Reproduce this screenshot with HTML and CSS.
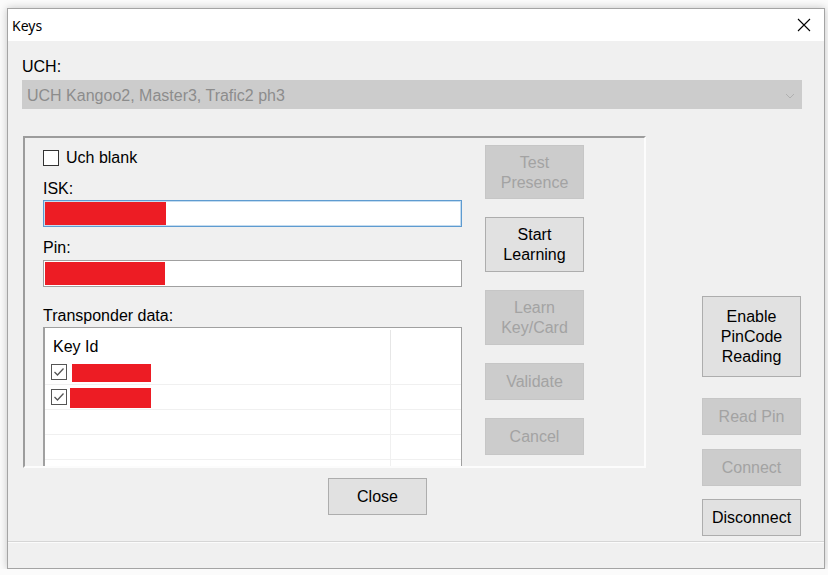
FILE: index.html
```html
<!DOCTYPE html>
<html lang="en">
<head>
<meta charset="utf-8">
<title>Keys</title>
<link rel="stylesheet" href="styles.css">
</head>
<body>
  <div class="window">
    <header class="titlebar">
      <span class="title">Keys</span>
      <svg class="close-x" width="14" height="14" viewBox="0 0 14 14">
        <path d="M1 1L13 13M13 1L1 13" stroke="#000" stroke-width="1.1" fill="none"/>
      </svg>
    </header>

    <section class="client">
      <div class="top">
        <div class="caption">UCH:</div>
        <div class="combo">
          <span>UCH Kangoo2, Master3, Trafic2 ph3</span>
          <svg class="chevron" width="10" height="6" viewBox="0 0 10 6">
            <path d="M1 1L5 5L9 1" stroke="#b0b0b0" fill="none"/>
          </svg>
        </div>
      </div>

      <section class="workspace">
        <div class="left-side">
          <div class="panel">
            <div class="form">
              <label class="check-row"><span class="checkbox"></span>Uch blank</label>

              <div class="caption isk-caption">ISK:</div>
              <div class="textbox focused"><span class="redacted"></span></div>

              <div class="caption pin-caption">Pin:</div>
              <div class="textbox"><span class="redacted pin"></span></div>

              <div class="caption list-caption">Transponder data:</div>
              <div class="listview">
                <div class="lv-header">
                  <div class="lv-col">Key Id</div>
                  <div></div>
                </div>
                <div class="lv-row">
                  <div class="lv-cell">
                    <span class="checkbox checked">
                      <svg width="14" height="14" viewBox="0 0 14 14"><path d="M2.5 7L5.5 10L11.5 3.5" stroke="#555" stroke-width="1.3" fill="none"/></svg>
                    </span>
                    <span class="redacted first"></span>
                  </div>
                  <div></div>
                </div>
                <div class="lv-row">
                  <div class="lv-cell">
                    <span class="checkbox checked">
                      <svg width="14" height="14" viewBox="0 0 14 14"><path d="M2.5 7L5.5 10L11.5 3.5" stroke="#555" stroke-width="1.3" fill="none"/></svg>
                    </span>
                    <span class="redacted second"></span>
                  </div>
                  <div></div>
                </div>
                <div class="lv-row"><div class="lv-cell"></div><div></div></div>
                <div class="lv-row"><div class="lv-cell"></div><div></div></div>
                <div class="lv-row"><div class="lv-cell"></div><div></div></div>
              </div>
            </div>

            <div class="actions">
              <button class="btn disabled h54">Test<br>Presence</button>
              <button class="btn h55">Start<br>Learning</button>
              <button class="btn disabled h55">Learn<br>Key/Card</button>
              <button class="btn disabled">Validate</button>
              <button class="btn disabled">Cancel</button>
            </div>
          </div>

          <button class="btn close-btn">Close</button>
        </div>

        <div class="side-actions">
          <button class="btn pincode">Enable<br>PinCode<br>Reading</button>
          <button class="btn disabled read-pin">Read Pin</button>
          <button class="btn disabled connect">Connect</button>
          <button class="btn disconnect">Disconnect</button>
        </div>
      </section>

      <footer class="statusbar"></footer>
    </section>
  </div>
</body>
</html>
```

FILE: styles.css
```css
* {
    margin: 0;
    padding: 0;
    box-sizing: border-box;
}
body
{
    background: #fbfbfb;
    font-family: "Liberation Sans", Arial, sans-serif;
    font-size: 16px;
    color: #000;
}
.window
{
    width: 818px;
    height: 561px;
    margin: 8px 0 0 7px;
    border: 1px solid #a4a4a4;
    box-shadow: 0 0 8px rgba(0, 0, 0, 0.22);
    display: flex;
    flex-direction: column;
    background: #f0f0f0;
}

/* title bar */
.titlebar
{
    height: 32px;
    flex-shrink: 0;
    background: #fff;
    display: flex;
    align-items: center;
    justify-content: space-between;
    padding: 0 13px 0 4px;
}
.title
{
    font-family: "Noto Sans", sans-serif;
    font-size: 14px;
}

.client
{
    flex: 1;
    display: flex;
    flex-direction: column;
}
.top
{
    padding: 15px 22px 0 14px;
}
.caption
{
    line-height: 20px;
    height: 20px;
    padding-top: 1px;
}
.combo
{
    margin-top: 4px;
    height: 29px;
    background: #cccccc;
    color: #8c8c8c;
    display: flex;
    align-items: center;
    justify-content: space-between;
    padding: 2px 7px 0 5px;
}

/* main area */
.workspace
{
    flex: 1;
    display: flex;
    margin-top: 27px;
    padding-left: 15px;
}
.panel
{
    width: 623px;
    height: 332px;
    border-top: 2px solid #9c9c9c;
    border-left: 2px solid #9c9c9c;
    border-right: 2px solid #fcfcfc;
    border-bottom: 2px solid #fcfcfc;
    overflow: hidden;
    display: flex;
    padding: 7px 0 0 18px;
}
.form
{
    width: 419px;
    padding-top: 2px;
}
.check-row
{
    display: flex;
    align-items: center;
    height: 20px;
    padding-top: 1px;
}
.checkbox
{
    width: 16px;
    height: 16px;
    border: 1px solid #333;
    background: #fff;
    margin-right: 7px;
    display: inline-flex;
    align-items: center;
    justify-content: center;
    flex-shrink: 0;
}
.checkbox.checked
{
    border-color: #555;
    margin-right: 0;
}
.isk-caption
{
    margin-top: 11px;
}
.pin-caption
{
    margin-top: 10px;
}
.list-caption
{
    margin-top: 18px;
}
.textbox
{
    margin-top: 2px;
    height: 27px;
    background: #fff;
    border: 1px solid #a0a0a0;
    padding: 1px;
    display: flex;
}
.pin-caption + .textbox
{
    margin-top: 3px;
}
.textbox.focused
{
    border-color: #5e9bd0;
    box-shadow: inset 0 0 0 1px #c4dcf0;
}
.redacted
{
    display: block;
    background: #ed1c24;
    width: 121px;
    height: 100%;
}
.redacted.pin
{
    width: 120px;
}

/* transponder list */
.listview
{
    margin-top: 2px;
    height: 180px;
    background: #fff;
    border: 1px solid #a0a0a0;
    border-left-width: 2px;
}
.lv-header,
.lv-row
{
    display: grid;
    grid-template-columns: 346px 1fr;
}
.lv-header
{
    height: 32px;
}
.lv-col
{
    padding: 8px 0 0 8px;
    border-right: 1px solid #e6e6e6;
    margin-top: 2px;
}
.lv-row
{
    height: 25px;
    border-bottom: 1px solid #f0f0f0;
}
.lv-cell
{
    display: flex;
    align-items: flex-start;
    padding: 4px 0 0 6px;
    border-right: 1px solid #f0f0f0;
}
.redacted.first
{
    margin-left: 5px;
    width: 79px;
    height: 18px;
}
.redacted.second
{
    margin-left: 3px;
    margin-top: -1px;
    width: 81px;
    height: 20px;
}

/* buttons */
.btn
{
    display: block;
    width: 99px;
    height: 37px;
    padding-top: 1px;
    font-family: "Liberation Sans", Arial, sans-serif;
    font-size: 16px;
    line-height: 20px;
    color: #000;
    background: #e1e1e1;
    border: 1px solid #adadad;
}
.btn.disabled
{
    background: #cccccc;
    border-color: #c6c6c6;
    color: #a3a3a3;
}
.h54
{
    height: 54px;
}
.h55
{
    height: 55px;
}
.actions
{
    margin-left: 23px;
    display: flex;
    flex-direction: column;
    gap: 18px;
}
.close-btn
{
    margin: 10px 0 0 305px;
}
.side-actions
{
    margin-left: 56px;
    padding-top: 160px;
}
.pincode
{
    height: 81px;
}
.read-pin
{
    margin-top: 21px;
}
.connect
{
    margin-top: 14px;
}
.disconnect
{
    margin-top: 13px;
}

.statusbar
{
    height: 27px;
    flex-shrink: 0;
    border-top: 1px solid #d6d6d6;
    box-shadow: inset 0 1px #fbfbfb;
}
```
